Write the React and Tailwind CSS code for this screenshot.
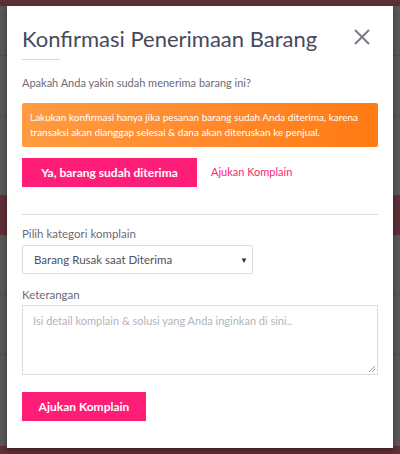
import React from 'react';

export default function App() {
  return (
    <div className="relative h-[454px] w-[400px] overflow-hidden bg-[#585858]" style={{ fontFamily: 'Lato, "Open Sans", sans-serif' }}>
      {/* dimmed page behind the modal */}
      <div className="absolute inset-0 flex flex-col">
        <div className="h-[6px] bg-[#5e2f38]"></div>
        <div className="h-[50px] border-b border-[#4e4e4e]"></div>
        <div className="h-[60px] border-b border-[#4e4e4e]"></div>
        <div className="h-[79px]"></div>
        <div className="h-[40px] bg-[#5e2f38]"></div>
        <div className="h-[60px] border-b border-[#4e4e4e]"></div>
        <div className="h-[60px] border-b border-[#4e4e4e]"></div>
        <div className="flex-1"></div>
        <div className="h-[8px] bg-[#5e2f38]"></div>
      </div>

      {/* modal */}
      <div className="absolute left-[7px] top-[6px] h-[442px] w-[386px] bg-white px-[15px] pt-[20px] shadow-[0_2px_6px_rgba(0,0,0,0.4)]">
        <div className="flex items-start justify-between">
          <h1 className="text-[22px] leading-[26px] text-[#48485c]">Konfirmasi Penerimaan Barang</h1>
          <button className="mr-[8px] mt-[3px] text-[#7a7a8a]">
            <svg width="16" height="16" viewBox="0 0 16 16" fill="none" stroke="currentColor" strokeWidth="2">
              <path d="M1 1L15 15M15 1L1 15" />
            </svg>
          </button>
        </div>
        <div className="mt-[7px] h-[1px] w-[38px] bg-[#d8d8d8]"></div>

        <p className="mt-[15px] text-[11px] leading-[16px] text-[#6b6b75]">Apakah Anda yakin sudah menerima barang ini?</p>

        <div className="mt-[12px] h-[44px] rounded-[2px] bg-gradient-to-r from-[#ff9b40] to-[#ff7a12] px-[8px] py-[7px] text-[10px] leading-[15px] text-white">
          Lakukan konfirmasi hanya jika pesanan barang sudah Anda diterima, karena transaksi akan dianggap selesai &amp; dana akan diteruskan ke penjual.
        </div>

        <div className="mt-[11px] flex items-center gap-[14px]">
          <button className="h-[29px] w-[175px] bg-[#ff1e77] text-[12px] font-bold text-white">Ya, barang sudah diterima</button>
          <span className="text-[11px] text-[#ff1e77]">Ajukan Komplain</span>
        </div>

        <div className="mt-[27px] h-[1px] bg-[#dcdcdc]"></div>

        <p className="mt-[11px] text-[11.5px] leading-[16px] text-[#6b6b75]">Pilih kategori komplain</p>
        <div className="mt-[3px] flex h-[29px] w-[231px] items-center justify-between rounded-[2px] border border-[#dcdcdc] pl-[11px] pr-[4px] text-[11.5px] text-[#505060]">
          <span>Barang Rusak saat Diterima</span>
          <span className="text-[8px] text-[#333]">▼</span>
        </div>

        <p className="mt-[13px] text-[11.5px] leading-[16px] text-[#6b6b75]">Keterangan</p>
        <div className="relative mt-[2px] h-[70px] border border-[#dcdcdc] px-[10px] py-[7px] text-[11px] text-[#b4b4ba]">
          Isi detail komplain &amp; solusi yang Anda inginkan di sini..
          <svg className="absolute bottom-[2px] right-[2px]" width="7" height="7" viewBox="0 0 7 7" stroke="#999" strokeWidth="1">
            <path d="M1 7L7 1M4 7L7 4" />
          </svg>
        </div>

        <button className="mt-[17px] h-[29px] w-[124px] bg-[#ff1e77] text-[12px] font-bold text-white">Ajukan Komplain</button>
      </div>
    </div>
  );
}
